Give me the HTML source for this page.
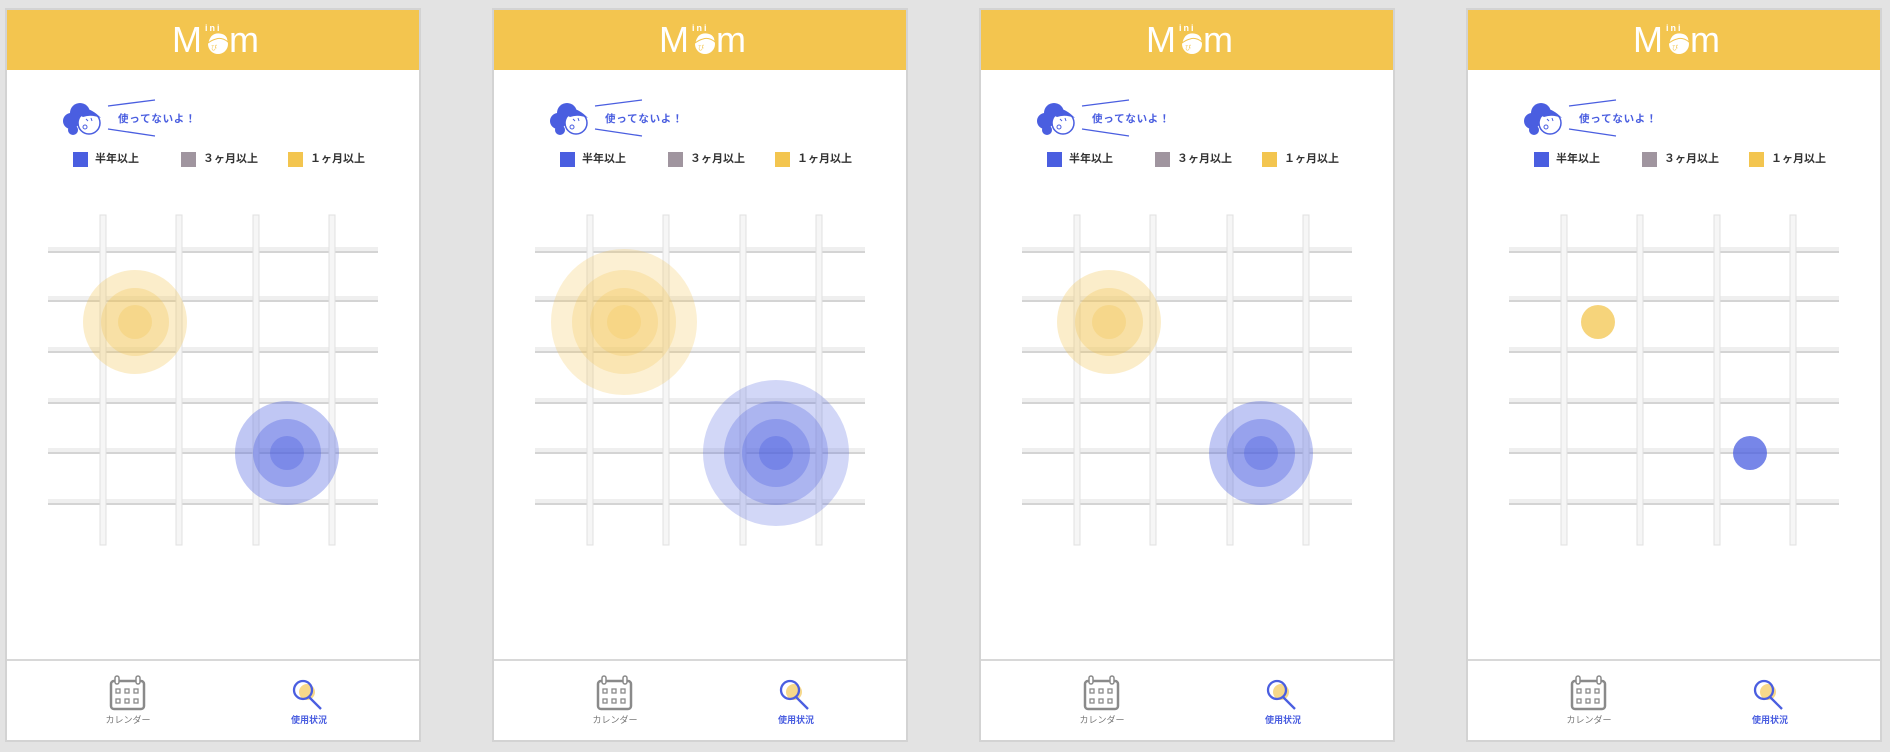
<!DOCTYPE html>
<html><head><meta charset="utf-8"><style>
*{margin:0;padding:0;box-sizing:border-box}
body{width:1890px;height:752px;background:#e3e3e3;position:relative;overflow:hidden;font-family:"Liberation Sans","Noto Sans CJK JP",sans-serif}
.p{position:absolute;top:8px;width:416px;height:734px;border:2px solid #d3d3d3;background:#fff}
.hd{position:absolute;left:0;top:0;width:412px;height:60px;background:#f3c54f}
.nav{position:absolute;left:0;top:649px;width:412px;height:81px;border-top:2px solid #d8d8d8}
.lab{position:absolute;font-size:9px;top:52px;transform:translateX(-50%);white-space:nowrap}
.lg{position:absolute;top:142px;height:15px;font-size:11px;font-weight:bold;color:#333;line-height:15px}
.lg i{display:inline-block;width:15px;height:15px;vertical-align:top;margin-right:7px}
svg{position:absolute;left:0;top:0}
.y{fill:#f3c54f;fill-opacity:.3}
.b{fill:#4a5ee0;fill-opacity:.35}
</style></head><body>

<div class="p" style="left:5px">
<div class="hd"><svg width="412" height="60"><text x="165" y="42" font-family="Liberation Sans" font-size="36" fill="#fff">M</text><text x="222" y="42" font-family="Liberation Sans" font-size="36" fill="#fff">m</text><text x="198" y="21" font-size="9" fill="#fff" font-family="Liberation Sans" font-weight="bold" letter-spacing="2">ini</text><circle cx="211" cy="34" r="10" fill="#fff"/><path d="M201 33 q2-11 12-10 q8 1 8 9 q-6 -5 -12 -3 q-4 1 -8 4z" fill="#fff" stroke="#f3c54f" stroke-width="1"/><text x="204" y="40" font-size="6" fill="#f3c54f">ぴ</text></svg></div>
<svg width="412" height="649">
<g fill="#4a5ee0"><circle cx="73" cy="103" r="10"/><circle cx="64" cy="111" r="8"/><circle cx="66" cy="120" r="5"/></g>
<circle cx="82" cy="113" r="11" fill="#fff" stroke="#4a5ee0" stroke-width="1.5"/><path d="M70 104 q8-12 24 4 q-10-4 -18 -1z" fill="#4a5ee0"/><circle cx="78" cy="117" r="2" fill="none" stroke="#4a5ee0"/><path d="M79 109 l2 2 M84 108 l1 3" stroke="#4a5ee0"/>
<path d="M101 96 L148 90 M101 119 L148 126" stroke="#4a5ee0" stroke-width="1.3"/>
<text x="111" y="112" font-size="10.5" fill="#4a5ee0" font-weight="bold" letter-spacing=".8">使ってないよ！</text>
<g fill="#efefef"><rect x="41" y="237" width="330" height="5"/><rect x="41" y="286" width="330" height="5"/><rect x="41" y="337" width="330" height="5"/><rect x="41" y="388" width="330" height="5"/><rect x="41" y="438" width="330" height="5"/><rect x="41" y="489" width="330" height="5"/></g>
<g fill="#d4d4d4"><rect x="41" y="241" width="330" height="2"/><rect x="41" y="290" width="330" height="2"/><rect x="41" y="341" width="330" height="2"/><rect x="41" y="392" width="330" height="2"/><rect x="41" y="442" width="330" height="2"/><rect x="41" y="493" width="330" height="2"/></g>
<g fill="#f6f6f6" stroke="#e0e0e0" stroke-width="1"><rect x="93" y="205" width="6" height="330"/><rect x="169" y="205" width="6" height="330"/><rect x="246" y="205" width="6" height="330"/><rect x="322" y="205" width="6" height="330"/></g>
<circle class="y" cx="128" cy="312" r="52"/><circle class="y" cx="128" cy="312" r="34"/><circle class="y" cx="128" cy="312" r="17"/>
<circle class="b" cx="280" cy="443" r="52"/><circle class="b" cx="280" cy="443" r="34"/><circle class="b" cx="280" cy="443" r="17"/>
</svg>
<div class="lg" style="left:66px"><i style="background:#4a5ee0"></i>半年以上</div>
<div class="lg" style="left:174px"><i style="background:#a0959f"></i>３ヶ月以上</div>
<div class="lg" style="left:281px"><i style="background:#f3c54f"></i>１ヶ月以上</div>
<div class="nav"><svg width="412" height="81"><rect x="104" y="20" width="33" height="28" rx="3" fill="none" stroke="#8a8a8a" stroke-width="2.5"/><rect x="108" y="15" width="4" height="8" rx="2" fill="#fff" stroke="#8a8a8a" stroke-width="1.5"/><rect x="129" y="15" width="4" height="8" rx="2" fill="#fff" stroke="#8a8a8a" stroke-width="1.5"/><g fill="none" stroke="#8a8a8a" stroke-width="1.3"><rect x="109" y="28" width="4" height="4"/><rect x="118" y="28" width="4" height="4"/><rect x="127" y="28" width="4" height="4"/><rect x="109" y="38" width="4" height="4"/><rect x="118" y="38" width="4" height="4"/><rect x="127" y="38" width="4" height="4"/></g><circle cx="300" cy="31" r="8" fill="#f6d88a"/><circle cx="296" cy="29" r="9" fill="none" stroke="#4a5ee0" stroke-width="2.3"/><path d="M302 36 L314 48" stroke="#4a5ee0" stroke-width="2.3"/></svg>
<div class="lab" style="left:121px;color:#777">カレンダー</div><div class="lab" style="left:302px;color:#4a5ee0;font-weight:bold">使用状況</div></div>
</div>

<div class="p" style="left:492px">
<div class="hd"><svg width="412" height="60"><text x="165" y="42" font-family="Liberation Sans" font-size="36" fill="#fff">M</text><text x="222" y="42" font-family="Liberation Sans" font-size="36" fill="#fff">m</text><text x="198" y="21" font-size="9" fill="#fff" font-family="Liberation Sans" font-weight="bold" letter-spacing="2">ini</text><circle cx="211" cy="34" r="10" fill="#fff"/><path d="M201 33 q2-11 12-10 q8 1 8 9 q-6 -5 -12 -3 q-4 1 -8 4z" fill="#fff" stroke="#f3c54f" stroke-width="1"/><text x="204" y="40" font-size="6" fill="#f3c54f">ぴ</text></svg></div>
<svg width="412" height="649">
<g fill="#4a5ee0"><circle cx="73" cy="103" r="10"/><circle cx="64" cy="111" r="8"/><circle cx="66" cy="120" r="5"/></g>
<circle cx="82" cy="113" r="11" fill="#fff" stroke="#4a5ee0" stroke-width="1.5"/><path d="M70 104 q8-12 24 4 q-10-4 -18 -1z" fill="#4a5ee0"/><circle cx="78" cy="117" r="2" fill="none" stroke="#4a5ee0"/><path d="M79 109 l2 2 M84 108 l1 3" stroke="#4a5ee0"/>
<path d="M101 96 L148 90 M101 119 L148 126" stroke="#4a5ee0" stroke-width="1.3"/>
<text x="111" y="112" font-size="10.5" fill="#4a5ee0" font-weight="bold" letter-spacing=".8">使ってないよ！</text>
<g fill="#efefef"><rect x="41" y="237" width="330" height="5"/><rect x="41" y="286" width="330" height="5"/><rect x="41" y="337" width="330" height="5"/><rect x="41" y="388" width="330" height="5"/><rect x="41" y="438" width="330" height="5"/><rect x="41" y="489" width="330" height="5"/></g>
<g fill="#d4d4d4"><rect x="41" y="241" width="330" height="2"/><rect x="41" y="290" width="330" height="2"/><rect x="41" y="341" width="330" height="2"/><rect x="41" y="392" width="330" height="2"/><rect x="41" y="442" width="330" height="2"/><rect x="41" y="493" width="330" height="2"/></g>
<g fill="#f6f6f6" stroke="#e0e0e0" stroke-width="1"><rect x="93" y="205" width="6" height="330"/><rect x="169" y="205" width="6" height="330"/><rect x="246" y="205" width="6" height="330"/><rect x="322" y="205" width="6" height="330"/></g>
<circle class="y" style="fill-opacity:.25" cx="130" cy="312" r="73"/><circle class="y" style="fill-opacity:.25" cx="130" cy="312" r="52"/><circle class="y" style="fill-opacity:.25" cx="130" cy="312" r="34"/><circle class="y" style="fill-opacity:.25" cx="130" cy="312" r="17"/>
<circle class="b" style="fill-opacity:.25" cx="282" cy="443" r="73"/><circle class="b" style="fill-opacity:.28" cx="282" cy="443" r="52"/><circle class="b" style="fill-opacity:.3" cx="282" cy="443" r="34"/><circle class="b" style="fill-opacity:.35" cx="282" cy="443" r="17"/>
</svg>
<div class="lg" style="left:66px"><i style="background:#4a5ee0"></i>半年以上</div>
<div class="lg" style="left:174px"><i style="background:#a0959f"></i>３ヶ月以上</div>
<div class="lg" style="left:281px"><i style="background:#f3c54f"></i>１ヶ月以上</div>
<div class="nav"><svg width="412" height="81"><rect x="104" y="20" width="33" height="28" rx="3" fill="none" stroke="#8a8a8a" stroke-width="2.5"/><rect x="108" y="15" width="4" height="8" rx="2" fill="#fff" stroke="#8a8a8a" stroke-width="1.5"/><rect x="129" y="15" width="4" height="8" rx="2" fill="#fff" stroke="#8a8a8a" stroke-width="1.5"/><g fill="none" stroke="#8a8a8a" stroke-width="1.3"><rect x="109" y="28" width="4" height="4"/><rect x="118" y="28" width="4" height="4"/><rect x="127" y="28" width="4" height="4"/><rect x="109" y="38" width="4" height="4"/><rect x="118" y="38" width="4" height="4"/><rect x="127" y="38" width="4" height="4"/></g><circle cx="300" cy="31" r="8" fill="#f6d88a"/><circle cx="296" cy="29" r="9" fill="none" stroke="#4a5ee0" stroke-width="2.3"/><path d="M302 36 L314 48" stroke="#4a5ee0" stroke-width="2.3"/></svg>
<div class="lab" style="left:121px;color:#777">カレンダー</div><div class="lab" style="left:302px;color:#4a5ee0;font-weight:bold">使用状況</div></div>
</div>

<div class="p" style="left:979px">
<div class="hd"><svg width="412" height="60"><text x="165" y="42" font-family="Liberation Sans" font-size="36" fill="#fff">M</text><text x="222" y="42" font-family="Liberation Sans" font-size="36" fill="#fff">m</text><text x="198" y="21" font-size="9" fill="#fff" font-family="Liberation Sans" font-weight="bold" letter-spacing="2">ini</text><circle cx="211" cy="34" r="10" fill="#fff"/><path d="M201 33 q2-11 12-10 q8 1 8 9 q-6 -5 -12 -3 q-4 1 -8 4z" fill="#fff" stroke="#f3c54f" stroke-width="1"/><text x="204" y="40" font-size="6" fill="#f3c54f">ぴ</text></svg></div>
<svg width="412" height="649">
<g fill="#4a5ee0"><circle cx="73" cy="103" r="10"/><circle cx="64" cy="111" r="8"/><circle cx="66" cy="120" r="5"/></g>
<circle cx="82" cy="113" r="11" fill="#fff" stroke="#4a5ee0" stroke-width="1.5"/><path d="M70 104 q8-12 24 4 q-10-4 -18 -1z" fill="#4a5ee0"/><circle cx="78" cy="117" r="2" fill="none" stroke="#4a5ee0"/><path d="M79 109 l2 2 M84 108 l1 3" stroke="#4a5ee0"/>
<path d="M101 96 L148 90 M101 119 L148 126" stroke="#4a5ee0" stroke-width="1.3"/>
<text x="111" y="112" font-size="10.5" fill="#4a5ee0" font-weight="bold" letter-spacing=".8">使ってないよ！</text>
<g fill="#efefef"><rect x="41" y="237" width="330" height="5"/><rect x="41" y="286" width="330" height="5"/><rect x="41" y="337" width="330" height="5"/><rect x="41" y="388" width="330" height="5"/><rect x="41" y="438" width="330" height="5"/><rect x="41" y="489" width="330" height="5"/></g>
<g fill="#d4d4d4"><rect x="41" y="241" width="330" height="2"/><rect x="41" y="290" width="330" height="2"/><rect x="41" y="341" width="330" height="2"/><rect x="41" y="392" width="330" height="2"/><rect x="41" y="442" width="330" height="2"/><rect x="41" y="493" width="330" height="2"/></g>
<g fill="#f6f6f6" stroke="#e0e0e0" stroke-width="1"><rect x="93" y="205" width="6" height="330"/><rect x="169" y="205" width="6" height="330"/><rect x="246" y="205" width="6" height="330"/><rect x="322" y="205" width="6" height="330"/></g>
<circle class="y" cx="128" cy="312" r="52"/><circle class="y" cx="128" cy="312" r="34"/><circle class="y" cx="128" cy="312" r="17"/>
<circle class="b" cx="280" cy="443" r="52"/><circle class="b" cx="280" cy="443" r="34"/><circle class="b" cx="280" cy="443" r="17"/>
</svg>
<div class="lg" style="left:66px"><i style="background:#4a5ee0"></i>半年以上</div>
<div class="lg" style="left:174px"><i style="background:#a0959f"></i>３ヶ月以上</div>
<div class="lg" style="left:281px"><i style="background:#f3c54f"></i>１ヶ月以上</div>
<div class="nav"><svg width="412" height="81"><rect x="104" y="20" width="33" height="28" rx="3" fill="none" stroke="#8a8a8a" stroke-width="2.5"/><rect x="108" y="15" width="4" height="8" rx="2" fill="#fff" stroke="#8a8a8a" stroke-width="1.5"/><rect x="129" y="15" width="4" height="8" rx="2" fill="#fff" stroke="#8a8a8a" stroke-width="1.5"/><g fill="none" stroke="#8a8a8a" stroke-width="1.3"><rect x="109" y="28" width="4" height="4"/><rect x="118" y="28" width="4" height="4"/><rect x="127" y="28" width="4" height="4"/><rect x="109" y="38" width="4" height="4"/><rect x="118" y="38" width="4" height="4"/><rect x="127" y="38" width="4" height="4"/></g><circle cx="300" cy="31" r="8" fill="#f6d88a"/><circle cx="296" cy="29" r="9" fill="none" stroke="#4a5ee0" stroke-width="2.3"/><path d="M302 36 L314 48" stroke="#4a5ee0" stroke-width="2.3"/></svg>
<div class="lab" style="left:121px;color:#777">カレンダー</div><div class="lab" style="left:302px;color:#4a5ee0;font-weight:bold">使用状況</div></div>
</div>

<div class="p" style="left:1466px">
<div class="hd"><svg width="412" height="60"><text x="165" y="42" font-family="Liberation Sans" font-size="36" fill="#fff">M</text><text x="222" y="42" font-family="Liberation Sans" font-size="36" fill="#fff">m</text><text x="198" y="21" font-size="9" fill="#fff" font-family="Liberation Sans" font-weight="bold" letter-spacing="2">ini</text><circle cx="211" cy="34" r="10" fill="#fff"/><path d="M201 33 q2-11 12-10 q8 1 8 9 q-6 -5 -12 -3 q-4 1 -8 4z" fill="#fff" stroke="#f3c54f" stroke-width="1"/><text x="204" y="40" font-size="6" fill="#f3c54f">ぴ</text></svg></div>
<svg width="412" height="649">
<g fill="#4a5ee0"><circle cx="73" cy="103" r="10"/><circle cx="64" cy="111" r="8"/><circle cx="66" cy="120" r="5"/></g>
<circle cx="82" cy="113" r="11" fill="#fff" stroke="#4a5ee0" stroke-width="1.5"/><path d="M70 104 q8-12 24 4 q-10-4 -18 -1z" fill="#4a5ee0"/><circle cx="78" cy="117" r="2" fill="none" stroke="#4a5ee0"/><path d="M79 109 l2 2 M84 108 l1 3" stroke="#4a5ee0"/>
<path d="M101 96 L148 90 M101 119 L148 126" stroke="#4a5ee0" stroke-width="1.3"/>
<text x="111" y="112" font-size="10.5" fill="#4a5ee0" font-weight="bold" letter-spacing=".8">使ってないよ！</text>
<g fill="#efefef"><rect x="41" y="237" width="330" height="5"/><rect x="41" y="286" width="330" height="5"/><rect x="41" y="337" width="330" height="5"/><rect x="41" y="388" width="330" height="5"/><rect x="41" y="438" width="330" height="5"/><rect x="41" y="489" width="330" height="5"/></g>
<g fill="#d4d4d4"><rect x="41" y="241" width="330" height="2"/><rect x="41" y="290" width="330" height="2"/><rect x="41" y="341" width="330" height="2"/><rect x="41" y="392" width="330" height="2"/><rect x="41" y="442" width="330" height="2"/><rect x="41" y="493" width="330" height="2"/></g>
<g fill="#f6f6f6" stroke="#e0e0e0" stroke-width="1"><rect x="93" y="205" width="6" height="330"/><rect x="169" y="205" width="6" height="330"/><rect x="246" y="205" width="6" height="330"/><rect x="322" y="205" width="6" height="330"/></g>
<circle cx="130" cy="312" r="17" fill="#f3c54f" fill-opacity=".75"/>
<circle cx="282" cy="443" r="17" fill="#4a5ee0" fill-opacity=".75"/>
</svg>
<div class="lg" style="left:66px"><i style="background:#4a5ee0"></i>半年以上</div>
<div class="lg" style="left:174px"><i style="background:#a0959f"></i>３ヶ月以上</div>
<div class="lg" style="left:281px"><i style="background:#f3c54f"></i>１ヶ月以上</div>
<div class="nav"><svg width="412" height="81"><rect x="104" y="20" width="33" height="28" rx="3" fill="none" stroke="#8a8a8a" stroke-width="2.5"/><rect x="108" y="15" width="4" height="8" rx="2" fill="#fff" stroke="#8a8a8a" stroke-width="1.5"/><rect x="129" y="15" width="4" height="8" rx="2" fill="#fff" stroke="#8a8a8a" stroke-width="1.5"/><g fill="none" stroke="#8a8a8a" stroke-width="1.3"><rect x="109" y="28" width="4" height="4"/><rect x="118" y="28" width="4" height="4"/><rect x="127" y="28" width="4" height="4"/><rect x="109" y="38" width="4" height="4"/><rect x="118" y="38" width="4" height="4"/><rect x="127" y="38" width="4" height="4"/></g><circle cx="300" cy="31" r="8" fill="#f6d88a"/><circle cx="296" cy="29" r="9" fill="none" stroke="#4a5ee0" stroke-width="2.3"/><path d="M302 36 L314 48" stroke="#4a5ee0" stroke-width="2.3"/></svg>
<div class="lab" style="left:121px;color:#777">カレンダー</div><div class="lab" style="left:302px;color:#4a5ee0;font-weight:bold">使用状況</div></div>
</div>

</body></html>
